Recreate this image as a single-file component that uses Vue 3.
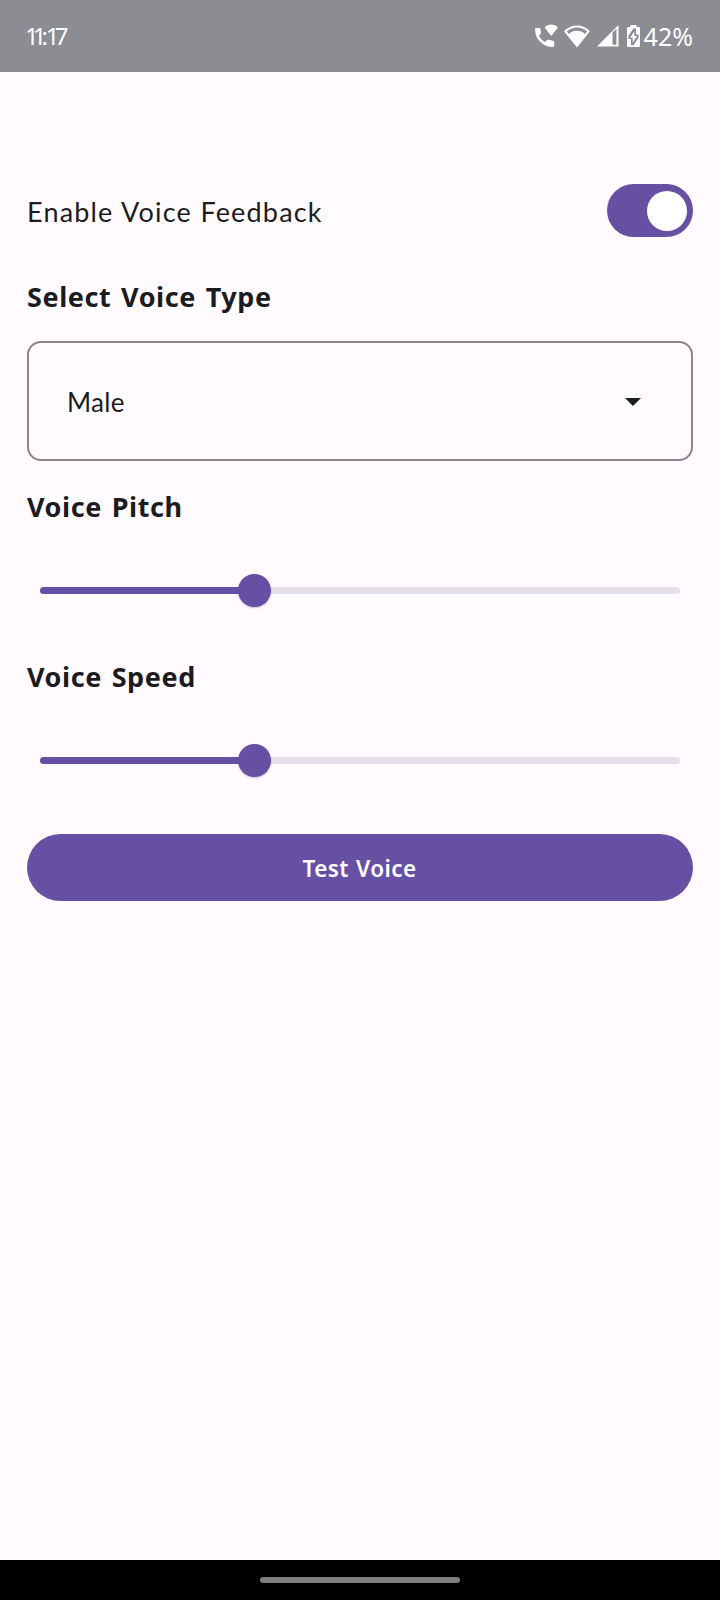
<script setup>
import { ref } from 'vue'

const enabled = ref(true)
const voiceType = ref('Male')
const pitch = 33.55
const speed = 33.55
</script>

<template>
  <div class="screen">
    <header class="status">
      <span class="time"><span class="h1">1</span><span class="h2">1</span><span class="colon">:</span><span class="m1">1</span><span>7</span></span>
      <div class="indicators">
        <svg class="call" viewBox="0 0 23 24">
          <path d="M0 5.2 C0 4.4 .5 4 1.2 4 H4.4 C5.1 4 5.4 4.4 5.5 5.1 L6 8.6 C6.1 9.2 5.9 9.6 5.5 10 L3.8 11.8 C5.2 14.4 7.2 16.6 9.9 18 L11.9 16.2 C12.3 15.8 12.7 15.7 13.3 15.8 L18.2 16.8 C18.9 17 19.2 17.3 19.2 18 V21.8 C19.2 22.6 18.8 23 18 23 C8 23 0 15 0 5.2 Z" />
          <path d="M9.6 3.4 C13.2 -.4 19.2 -.4 23 3.4 L16.3 12 Z" />
        </svg>
        <svg class="wifi" viewBox="0 0 26 23">
          <path fill-rule="evenodd" d="M0 6.3 C7 -1.5 19 -1.5 26 6.3 L13 22.5 Z M3 6.4 L5 8.9 C9.4 4.8 16.6 4.8 21 8.9 L23 6.4 C17.3 1.1 8.7 1.1 3 6.4 Z" />
        </svg>
        <svg class="signal" viewBox="0 0 22 22">
          <path fill-rule="evenodd" d="M0 21.5 L21.5 0 V21.5 Z M15.5 7.6 V19.7 H19.4 V4 Z" />
        </svg>
        <svg class="battery" viewBox="0 0 13 22">
          <path fill-rule="evenodd" d="M3.5 0 H9.5 V2 H11.7 Q13 2 13 3.3 V20.7 Q13 22 11.7 22 H1.3 Q0 22 0 20.7 V3.3 Q0 2 1.3 2 H3.5 Z M9 3.6 H6.4 L1.4 11 V14 H4 V20.2 H6.6 L11.6 12.5 V9.5 H9 Z" />
          <path d="M7.3 6.2 V11 H10 L5.7 17.8 V12.7 H3.1 Z" />
        </svg>
        <span class="percent">42%</span>
      </div>
    </header>

    <main class="content">
      <div class="row">
        <span class="label">Enable Voice Feedback</span>
        <button class="switch" :class="{ on: enabled }" @click="enabled = !enabled">
          <span class="knob"></span>
        </button>
      </div>

      <h2 class="type">Select Voice Type</h2>
      <div class="select">
        <span>{{ voiceType }}</span>
        <svg class="caret" viewBox="0 0 16 8"><path d="M0 0 H16 L8 8 Z" /></svg>
      </div>

      <h2 class="pitch">Voice Pitch</h2>
      <div class="slider">
        <div class="fill" :style="{ width: pitch + '%' }"><span class="thumb"></span></div>
      </div>

      <h2 class="speed">Voice Speed</h2>
      <div class="slider">
        <div class="fill" :style="{ width: speed + '%' }"><span class="thumb"></span></div>
      </div>

      <button class="test"><span>Test Voice</span></button>
    </main>

    <footer class="nav"><span class="pill"></span></footer>
  </div>
</template>

<style>
body {
  margin: 0;
}
</style>

<style scoped>
.screen {
  width: 720px;
  height: 1600px;
  display: flex;
  flex-direction: column;
  background: #fffbff;
  color: #1c1b1f;
  font-family: Lato, "Liberation Sans", sans-serif;
  overflow: hidden;
}
.status {
  height: 72px;
  box-sizing: border-box;
  padding: 0 27px 0 25px;
  display: flex;
  justify-content: space-between;
  align-items: center;
  background: #8c8c93;
  color: #fff;
  font-size: 24px;
}
.time {
  font-family: "Noto Sans", sans-serif;
  font-weight: 400;
  line-height: 30px;
}
.h1 {
  letter-spacing: -6px;
}
.h2 {
  letter-spacing: -5px;
}
.colon {
  letter-spacing: -2.1px;
}
.m1 {
  letter-spacing: -4.9px;
}
.indicators {
  display: flex;
  align-items: center;
}
.indicators svg {
  fill: #fff;
  flex: none;
}
.call {
  width: 23px;
  height: 24px;
  margin-right: 6px;
}
.wifi {
  width: 26px;
  height: 23px;
  margin-right: 7px;
}
.signal {
  width: 22px;
  height: 22px;
  margin-right: 8px;
}
.battery {
  width: 13px;
  height: 22px;
  margin-right: 4px;
}
.percent {
  font-family: "Noto Sans", sans-serif;
  font-size: 25px;
  line-height: 30px;
}
.content {
  flex: 1;
  padding: 112px 27px 0;
}
.row {
  display: flex;
  align-items: center;
  justify-content: space-between;
  height: 53px;
}
.label {
  font-size: 27px;
  line-height: 32px;
  letter-spacing: 1.18px;
  word-spacing: 0.4px;
  padding-top: 3px;
}
.switch {
  width: 86px;
  height: 53px;
  padding: 0 6px;
  border: 0;
  border-radius: 27px;
  background: #79747e;
  display: flex;
  align-items: center;
}
.switch.on {
  background: #6750a4;
  justify-content: flex-end;
}
.knob {
  width: 40px;
  height: 40px;
  border-radius: 50%;
  background: #fff;
}
h2 {
  margin: 0;
  font-family: "Noto Sans", sans-serif;
  font-size: 27px;
  line-height: 32px;
  font-weight: 700;
  letter-spacing: 0.6px;
  word-spacing: 2px;
}
.type {
  margin-top: 44px;
}
.select {
  margin-top: 28px;
  height: 120px;
  box-sizing: border-box;
  border: 2px solid #8b868c;
  border-radius: 14px;
  padding: 1px 50px 0 38px;
  display: flex;
  align-items: center;
  justify-content: space-between;
  font-size: 26px;
  letter-spacing: 0.3px;
}
.select span {
  padding-top: 1px;
}
.caret {
  width: 16px;
  height: 8px;
  fill: #1c1b1f;
}
.pitch {
  margin-top: 30px;
}
.slider {
  height: 7px;
  margin: 64px 13px 0;
  border-radius: 4px;
  background: #e5dfe9;
}
.fill {
  position: relative;
  height: 100%;
  border-radius: 4px 0 0 4px;
  background: #6750a4;
}
.thumb {
  position: absolute;
  right: -16.5px;
  top: -13px;
  width: 33px;
  height: 33px;
  border-radius: 50%;
  background: #6750a4;
  box-shadow: 0 1px 2px rgba(60, 40, 110, 0.3);
}
.speed {
  margin-top: 67px;
}
.test {
  display: flex;
  align-items: center;
  justify-content: center;
  width: 666px;
  height: 67px;
  margin-top: 70px;
  padding: 2px 1px 0 0;
  border: 0;
  border-radius: 34px;
  background: #6750a4;
  color: #fff;
  font: 600 22.5px/30px "Noto Sans", sans-serif;
  letter-spacing: 0.4px;
  word-spacing: 1px;
}
.nav {
  height: 40px;
  display: flex;
  align-items: center;
  justify-content: center;
  background: #000;
}
.pill {
  width: 200px;
  height: 6px;
  border-radius: 3px;
  background: #7f7f7f;
}
</style>
